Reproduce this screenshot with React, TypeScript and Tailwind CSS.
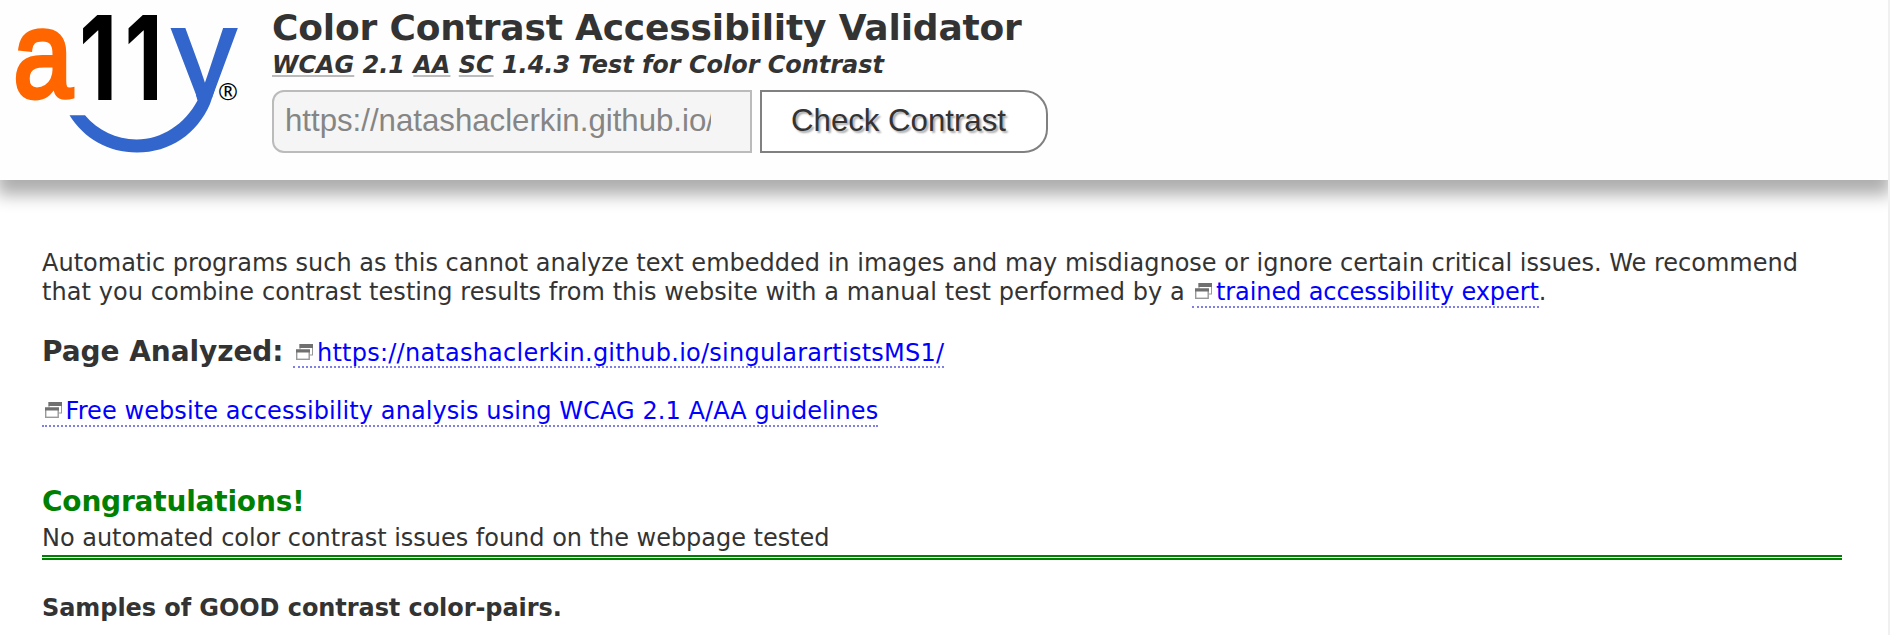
import type { ReactNode } from "react";

function Logo() {
  return (
    <svg width="230" height="160" viewBox="0 0 230 160" className="block shrink-0 overflow-visible" role="img" aria-label="a11y">
      <defs>
        <clipPath id="y-top">
          <rect x="-10" y="-72" width="100" height="70" />
        </clipPath>
      </defs>
      <g transform="translate(13.5 97) scale(0.86 1)">
        <text x="0" y="0" fontFamily="Liberation Sans, sans-serif" fontSize="123" fill="#ff6600" stroke="#ff6600" strokeWidth="5">a</text>
      </g>
      <g transform="translate(79 99.7) scale(0.76 1)" fontFamily="Inter, sans-serif" fontSize="117" fontWeight="700" fill="#000">
        <text x="0" y="0">1</text>
        <text x="60" y="0">1</text>
      </g>
      <g transform="translate(171.500 100) scale(0.96 1)">
        <g clipPath="url(#y-top)">
          <text x="0" y="0" fontFamily="Liberation Sans, sans-serif" fontSize="136" fill="#3366cc" stroke="#3366cc" strokeWidth="2.500">y</text>
        </g>
      </g>
      <path
        d="M69.5 115.3H85C98 130.500 116 139.500 136.500 139.500C162 139.500 185 124 197.500 100.500L196 95L206 82L217.500 81C215 88 212.500 97 210 104C197 134 170 152.500 137 152.500C108 152.500 84 138.500 69.500 115.300Z"
        fill="#3366cc"
      />
      <text x="218" y="99.500" fontFamily="Open Sans, sans-serif" fontSize="24" fill="#000">®</text>
    </svg>
  );
}

function WindowIcon() {
  return (
    <svg width="17" height="16" viewBox="0 0 17 16" className="ml-[3px] mr-[3.500px] inline-block align-[1px]" aria-hidden="true">
      <rect x="4" y="0.500" width="12.500" height="10.500" fill="#fff" stroke="#999" />
      <rect x="3.500" y="0" width="13.500" height="4" fill="#707070" />
      <rect x="0.700" y="6" width="12.500" height="9.300" fill="#fff" stroke="#999" strokeWidth="1.400" />
      <rect x="0" y="5.500" width="14" height="3" fill="#707070" />
    </svg>
  );
}

function ExternalLink({ className, children }: { className: string; children: ReactNode }) {
  return (
    <a href="#" className={`border-b-2 border-dotted border-[#7f7fe6] text-[#0000ff] ${className}`}>
      <WindowIcon />
      {children}
    </a>
  );
}

function Abbr({ children }: { children: ReactNode }) {
  return <abbr className="underline decoration-[#bbb] decoration-solid decoration-2 underline-offset-[2px]">{children}</abbr>;
}

export default function App() {
  return (
    <div className="h-[635px] overflow-hidden border-r-2 border-[#f0f0f0] bg-white font-['DejaVu_Sans',Verdana,sans-serif] text-[24px] leading-[29px] text-[#333]">
      <header className="flex h-[180px] bg-[#fefefe] shadow-[0_12px_16px_3px_#aeaeae]">
        <Logo />
        <div className="ml-[42px] pt-[7px]">
          <h1 className="text-[36px] leading-[42px] font-bold tracking-[-0.18px]">Color Contrast Accessibility Validator</h1>
          <p className="mt-[2px] font-bold italic tracking-[-0.03px]">
            <Abbr>WCAG</Abbr> 2.1 <Abbr>AA</Abbr> <Abbr>SC</Abbr> 1.4.3 Test for Color Contrast
          </p>
          <div className="mt-[10px] flex gap-2 font-['Liberation_Sans',Arial,sans-serif] text-[31.2px]">
            <div className="h-[63px] w-[480px] rounded-l-xl border-2 border-[#bbb] bg-[#f5f5f5] pl-[11px] leading-[57px] text-[#858585]">
              <div className="w-[426px] overflow-hidden whitespace-nowrap">https://natashaclerkin.github.io/</div>
            </div>
            <button className="h-[63px] w-[288px] rounded-r-3xl border-2 border-[#808080] bg-white pr-[11px] pb-[2px] leading-[57px] [text-shadow:2px_2px_2px_#aaa]">
              Check Contrast
            </button>
          </div>
        </div>
      </header>
      <main className="px-[42px] pt-[69px]">
        <p className="whitespace-nowrap tracking-[0.01px]">
          Automatic programs such as this cannot analyze text embedded in images and may misdiagnose or ignore certain critical issues. We recommend
          <br />
          <span className="tracking-[0.06px]">that you combine contrast testing results from this website with a manual test performed by a </span>
          <ExternalLink className="tracking-[-0.09px]">trained accessibility expert</ExternalLink>.
        </p>
        <div className="mt-7 flex h-[34px] items-baseline leading-[34px]">
          <h2 className="mr-[10px] text-[28px] font-bold tracking-[-0.06px]">Page Analyzed:</h2>
          <ExternalLink className="pb-px leading-none tracking-[0.24px]">https://natashaclerkin.github.io/singularartistsMS1/</ExternalLink>
        </div>
        <p className="mt-7 h-[29px]">
          <ExternalLink className="tracking-[0.08px]">Free website accessibility analysis using WCAG 2.1 A/AA guidelines</ExternalLink>
        </p>
        <section className="mt-[59px] mr-[4px] border-b-[5px] border-double border-[#008000] pb-[2px]">
          <h2 className="text-[28px] leading-[34px] font-bold tracking-[-0.2px] text-[#008000]">Congratulations!</h2>
          <p className="mt-[5px] tracking-[-0.02px]">No automated color contrast issues found on the webpage tested</p>
        </section>
        <h3 className="mt-[34px] font-bold tracking-[-0.07px]">Samples of GOOD contrast color-pairs.</h3>
      </main>
    </div>
  );
}
